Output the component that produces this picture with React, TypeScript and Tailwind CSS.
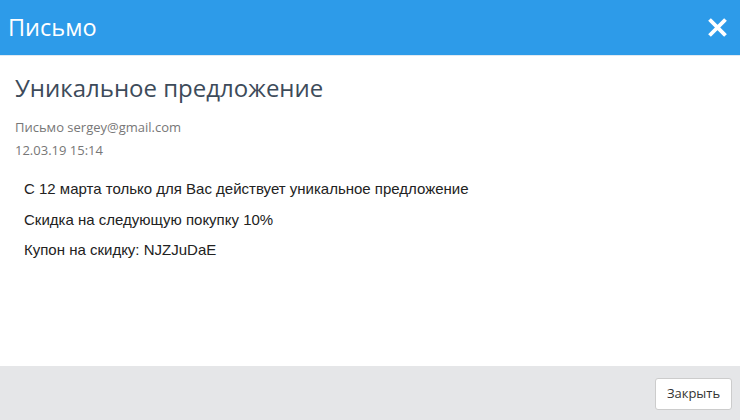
import React from "react";

const App: React.FC = () => {
  return (
    <div className="flex flex-col w-[740px] h-[420px] bg-white overflow-hidden font-['Open_Sans',sans-serif]">
      <div className="flex items-center justify-between h-[56px] bg-[#2d9be9] pl-[8px] pr-[13px] border-b border-[#dfe9f2]">
        <h1 className="text-[23.5px] text-white leading-none">Письмо</h1>
        <button className="text-white" aria-label="close">
          <svg width="19" height="19" viewBox="0 0 20 20">
            <path d="M3 3 L17 17 M17 3 L3 17" stroke="white" strokeWidth="4" strokeLinecap="square" />
          </svg>
        </button>
      </div>

      <div className="flex-1 px-[15px] pt-[17px]">
        <h2 className="text-[24px] text-[#3d4b5a] leading-[30px]">Уникальное предложение</h2>
        <div className="mt-[18px] text-[13px] text-[#777] leading-none">Письмо sergey@gmail.com</div>
        <div className="mt-[10px] text-[13px] text-[#777] leading-none">12.03.19 15:14</div>

        <div className="mt-[24px] pl-[9px] font-['Liberation_Sans',Arial,sans-serif] text-[15px] text-[#222] flex flex-col gap-[15.5px] leading-none">
          <p>С 12 марта только для Вас действует уникальное предложение</p>
          <p>Скидка на следующую покупку 10%</p>
          <p>Купон на скидку: NJZJuDaE</p>
        </div>
      </div>

      <div className="flex items-center justify-end h-[54px] bg-[#e5e6e8] pr-[8px] pt-[2px]">
        <button className="w-[77px] h-[32px] bg-white border border-[#ccc] rounded-[3px] text-[13px] text-[#333]">
          Закрыть
        </button>
      </div>
    </div>
  );
};

export default App;
